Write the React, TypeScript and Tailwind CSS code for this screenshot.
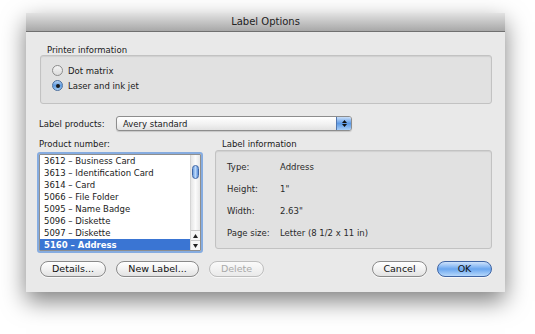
import React from "react";

const products = [
  "3612 – Business Card",
  "3613 – Identification Card",
  "3614 – Card",
  "5066 – File Folder",
  "5095 – Name Badge",
  "5096 – Diskette",
  "5097 – Diskette",
  "5160 – Address",
];

const info: [string, string][] = [
  ["Type:", "Address"],
  ["Height:", "1\""],
  ["Width:", "2.63\""],
  ["Page size:", "Letter (8 1/2 x 11 in)"],
];

function Radio({ label, checked }: { label: string; checked?: boolean }) {
  return (
    <div className="flex h-[15px] items-center gap-[5px]">
      {checked ? (
        <span className="flex h-[11px] w-[11px] items-center justify-center rounded-full border border-[#4a6f9f] bg-gradient-to-b from-[#b9d4f2] via-[#5d9ae0] to-[#a6cdf4]">
          <span className="h-[4px] w-[4px] rounded-full bg-[#1b1b1b]" />
        </span>
      ) : (
        <span className="h-[11px] w-[11px] rounded-full border border-[#8c8c8c] bg-gradient-to-b from-[#f4f4f4] to-[#dcdcdc]" />
      )}
      <span>{label}</span>
    </div>
  );
}

function PushButton({
  label,
  width,
  kind = "normal",
}: {
  label: string;
  width: string;
  kind?: "normal" | "default" | "disabled";
}) {
  const look =
    kind === "default"
      ? "border-[#3f64a3] bg-gradient-to-b from-[#cfe3fb] via-[#6aa6ef] to-[#b6d8fb] text-[#111]"
      : kind === "disabled"
        ? "border-[#bdbdbd] bg-gradient-to-b from-[#fafafa] to-[#eaeaea] text-[#a9a9a9]"
        : "border-[#8a8a8a] bg-gradient-to-b from-[#ffffff] via-[#f2f2f2] to-[#e2e2e2] text-[#111]";
  return (
    <div
      className={`flex h-[16px] items-center justify-center rounded-full border text-[9.5px] font-medium shadow-[0_1px_0_rgba(255,255,255,0.7)] ${width} ${look}`}
    >
      {label}
    </div>
  );
}

export default function App() {
  return (
    <div
      className="h-[334px] w-[535px] overflow-hidden bg-white pl-[26px] pt-[13px] text-[8.5px] leading-[10px] text-[#1a1a1a]"
      style={{ fontFamily: '"DejaVu Sans", Verdana, sans-serif' }}
    >
      <div className="flex h-[279px] w-[479px] flex-col bg-[#e9e9e9] shadow-[0_9px_22px_rgba(0,0,0,0.5)]">
        {/* title bar */}
        <div className="flex h-[19px] items-center justify-center border-b border-[#707070] bg-gradient-to-b from-[#e2e2e2] to-[#a8a8a8] text-[10px] text-[#222]">
          Label Options
        </div>

        <div className="flex flex-col px-[13px]">
          {/* printer information */}
          <div className="ml-[8px] mt-[13px] h-[10px]">Printer information</div>
          <div className="ml-[1px] flex h-[49px] flex-col rounded-[3px] border border-[#c2c2c2] bg-[#e1e1e1] pl-[11px] pt-[7px] shadow-[inset_0_1px_1px_rgba(0,0,0,0.08)]">
            <Radio label="Dot matrix" />
            <Radio label="Laser and ink jet" checked />
          </div>

          {/* label products */}
          <div className="mt-[12px] flex h-[15px] items-center">
            <span className="w-[77px]">Label products:</span>
            <div className="flex h-[15px] w-[236px] items-stretch overflow-hidden rounded-[3px] border border-[#8d8d8d] bg-gradient-to-b from-[#ffffff] via-[#f3f3f3] to-[#e2e2e2] shadow-[0_1px_1px_rgba(0,0,0,0.15)]">
              <span className="flex flex-1 items-center pl-[6px]">Avery standard</span>
              <span className="flex w-[15px] flex-col items-center justify-center gap-[1px] border-l border-[#5276ad] bg-gradient-to-b from-[#c9def8] via-[#5c99e4] to-[#a7cdf6]">
                <svg width="5" height="3" viewBox="0 0 5 3">
                  <path d="M0 3 L2.5 0 L5 3 Z" fill="#111" />
                </svg>
                <svg width="5" height="3" viewBox="0 0 5 3">
                  <path d="M0 0 L5 0 L2.5 3 Z" fill="#111" />
                </svg>
              </span>
            </div>
          </div>

          {/* columns */}
          <div className="ml-[-2px] mt-[8px] flex gap-[12px]">
            <div className="flex w-[166px] flex-col">
              <div className="ml-[2px] h-[10px]">Product number:</div>
              <div className="mt-[3px] flex h-[101px] overflow-hidden rounded-[3px] border-2 border-[#86ace0]">
                <div className="flex flex-1 overflow-hidden border border-[#8e8e8e] bg-white">
                  <div className="flex flex-1 flex-col">
                    {products.map((p, i) => (
                      <div
                        key={p}
                        className={`flex h-[12px] shrink-0 items-center pl-[4px] ${
                          i === products.length - 1 ? "bg-[#3a75d3] font-semibold text-white" : ""
                        }`}
                      >
                        {p}
                      </div>
                    ))}
                  </div>
                  {/* scrollbar */}
                  <div className="flex w-[10px] shrink-0 flex-col items-center border-l border-[#d5d5d5] bg-gradient-to-r from-[#e6e6e6] via-[#fbfbfb] to-[#e6e6e6]">
                    <div className="mt-[10px] h-[14px] w-[7px] rounded-full border border-[#3f66a6] bg-gradient-to-r from-[#6b9fe0] via-[#bcd8fa] to-[#5a8fd8]" />
                    <div className="flex-1" />
                    <div className="flex h-[10px] w-full items-center justify-center border-t border-[#c8c8c8] bg-[#f6f6f6]">
                      <svg width="5" height="4" viewBox="0 0 5 4">
                        <path d="M0 4 L2.5 0 L5 4 Z" fill="#222" />
                      </svg>
                    </div>
                    <div className="flex h-[10px] w-full items-center justify-center border-t border-[#c8c8c8] bg-[#f6f6f6]">
                      <svg width="5" height="4" viewBox="0 0 5 4">
                        <path d="M0 0 L5 0 L2.5 4 Z" fill="#222" />
                      </svg>
                    </div>
                  </div>
                </div>
              </div>
            </div>

            <div className="flex w-[277px] flex-col">
              <div className="ml-[7px] h-[10px]">Label information</div>
              <div className="mt-[1px] flex h-[99px] flex-col rounded-[3px] border border-[#c2c2c2] bg-[#e1e1e1] pl-[11px] pt-[5px] text-[#2a2a2a] shadow-[inset_0_1px_1px_rgba(0,0,0,0.08)]">
                {info.map(([k, v]) => (
                  <div key={k} className="flex h-[22px] items-center">
                    <span className="w-[53px]">{k}</span>
                    <span>{v}</span>
                  </div>
                ))}
              </div>
            </div>
          </div>

          {/* buttons */}
          <div className="ml-[1px] mt-[8px] flex items-center">
            <PushButton label="Details..." width="w-[66px]" />
            <div className="ml-[10px]">
              <PushButton label="New Label..." width="w-[83px]" />
            </div>
            <div className="ml-[10px]">
              <PushButton label="Delete" width="w-[55px]" kind="disabled" />
            </div>
            <div className="flex-1" />
            <PushButton label="Cancel" width="w-[55px]" />
            <div className="ml-[10px]">
              <PushButton label="OK" width="w-[55px]" kind="default" />
            </div>
          </div>
        </div>
      </div>
    </div>
  );
}
